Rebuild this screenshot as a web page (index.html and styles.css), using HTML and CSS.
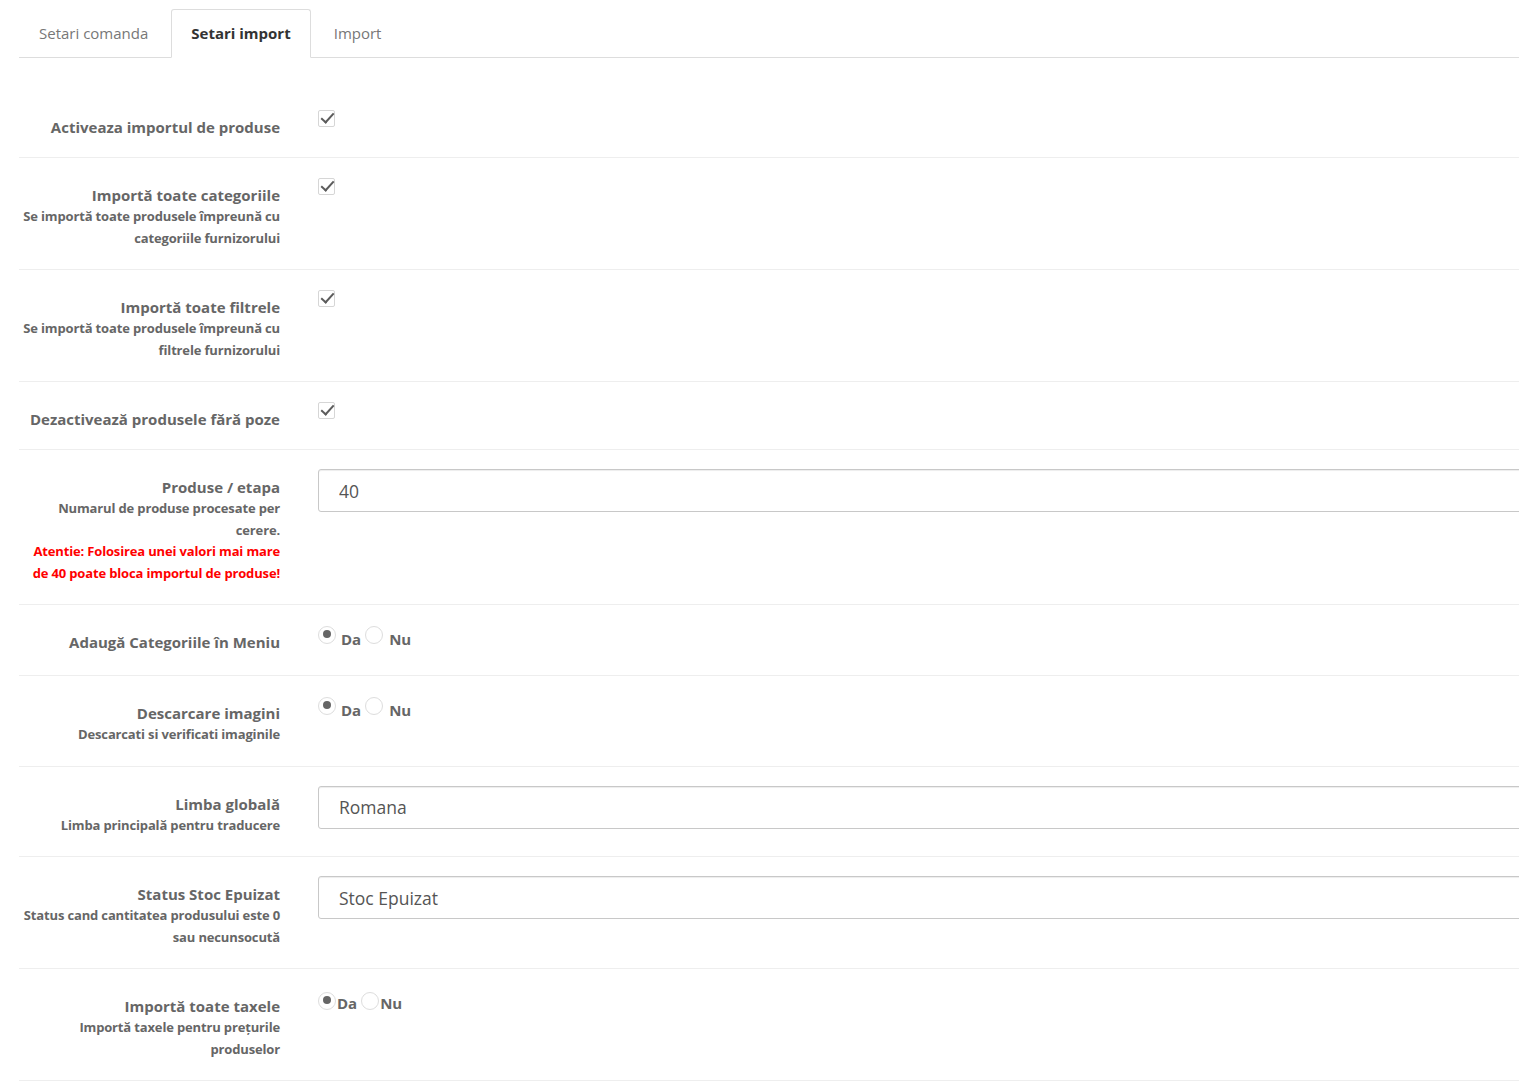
FILE: index.html
```html
<!DOCTYPE html>
<html lang="ro">
<head>
    <meta charset="UTF-8">
    <meta name="viewport" content="width=device-width, initial-scale=1.0">
    <title>Setari import</title>
    <link rel="stylesheet" href="styles.css">
</head>
<body>
    <div class="page">
        <ul class="tabs">
            <li class="tab">Setari comanda</li>
            <li class="tab active">Setari import</li>
            <li class="tab">Import</li>
        </ul>

        <form class="import-form">
            <div class="form-row">
                <div class="row-label">
                    <div class="label-title">Activeaza importul de produse</div>
                </div>
                <div class="row-control"><span class="checkbox"></span></div>
            </div>

            <div class="form-row">
                <div class="row-label">
                    <div class="label-title">Importă toate categoriile</div>
                    <div class="label-help">Se importă toate produsele împreună cu categoriile furnizorului</div>
                </div>
                <div class="row-control"><span class="checkbox"></span></div>
            </div>

            <div class="form-row">
                <div class="row-label">
                    <div class="label-title">Importă toate filtrele</div>
                    <div class="label-help">Se importă toate produsele împreună cu filtrele furnizorului</div>
                </div>
                <div class="row-control"><span class="checkbox"></span></div>
            </div>

            <div class="form-row">
                <div class="row-label">
                    <div class="label-title">Dezactivează produsele fără poze</div>
                </div>
                <div class="row-control"><span class="checkbox"></span></div>
            </div>

            <div class="form-row">
                <div class="row-label">
                    <div class="label-title">Produse / etapa</div>
                    <div class="label-help">Numarul de produse procesate per cerere.<br><span class="warning">Atentie: Folosirea unei valori mai mare de 40 poate bloca importul de produse!</span></div>
                </div>
                <div class="row-control"><input class="text-input" type="text" value="40"></div>
            </div>

            <div class="form-row">
                <div class="row-label">
                    <div class="label-title">Adaugă Categoriile în Meniu</div>
                </div>
                <div class="row-control">
                    <div class="radio-group">
                        <span class="radio checked"></span><span class="radio-text">Da</span>
                        <span class="radio"></span><span class="radio-text">Nu</span>
                    </div>
                </div>
            </div>

            <div class="form-row">
                <div class="row-label">
                    <div class="label-title">Descarcare imagini</div>
                    <div class="label-help">Descarcati si verificati imaginile</div>
                </div>
                <div class="row-control">
                    <div class="radio-group">
                        <span class="radio checked"></span><span class="radio-text">Da</span>
                        <span class="radio"></span><span class="radio-text">Nu</span>
                    </div>
                </div>
            </div>

            <div class="form-row">
                <div class="row-label">
                    <div class="label-title">Limba globală</div>
                    <div class="label-help">Limba principală pentru traducere</div>
                </div>
                <div class="row-control"><input class="text-input" type="text" value="Romana"></div>
            </div>

            <div class="form-row">
                <div class="row-label">
                    <div class="label-title">Status Stoc Epuizat</div>
                    <div class="label-help">Status cand cantitatea produsului este 0 sau necunsocută</div>
                </div>
                <div class="row-control"><input class="text-input" type="text" value="Stoc Epuizat"></div>
            </div>

            <div class="form-row">
                <div class="row-label">
                    <div class="label-title">Importă toate taxele</div>
                    <div class="label-help">Importă taxele pentru prețurile produselor</div>
                </div>
                <div class="row-control">
                    <div class="radio-group tight">
                        <span class="radio checked"></span><span class="radio-text">Da</span>
                        <span class="radio"></span><span class="radio-text">Nu</span>
                    </div>
                </div>
            </div>
        </form>
    </div>
</body>
</html>
```

FILE: styles.css
```css
* {
    margin: 0;
    padding: 0;
    box-sizing: border-box;
    font-family: 'Open Sans', 'Noto Sans', sans-serif;
}

body {
    background-color: #fff;
    color: #666;
    overflow: hidden;
}

.page {
    width: 1640px;
    padding-left: 19px;
}

/* Tabs */
.tabs {
    display: flex;
    list-style: none;
    padding-top: 9px;
    border-bottom: 1px solid #ddd;
}

.tab {
    padding: 0 19px;
    margin-right: 3px;
    line-height: 47px;
    font-size: 15px;
    color: #777;
    border: 1px solid transparent;
    border-radius: 3px 3px 0 0;
    margin-bottom: -1px;
}

.tab.active {
    color: #333;
    font-weight: 700;
    background: #fff;
    border-color: #ddd;
    border-bottom-color: #fff;
}

/* Form rows */
.import-form {
    margin-top: 32px;
}

.form-row {
    display: flex;
    align-items: flex-start;
    padding: 20px 0;
    border-bottom: 1px solid #eee;
}

.row-label {
    width: 261px;
    flex-shrink: 0;
    padding: 7px 0 0 2px;
    text-align: right;
}

.label-title {
    font-size: 15px;
    line-height: 20px;
    font-weight: 700;
    color: #666;
}

.label-help {
    margin-top: 1px;
    font-size: 13px;
    line-height: 21.5px;
    font-weight: 700;
    letter-spacing: -0.15px;
    color: #666;
}

.warning {
    color: #f00;
}

.row-control {
    flex: 1;
    margin-left: 38px;
}

.checkbox {
    display: block;
    width: 17px;
    height: 17px;
    border: 1px solid #d6d6d6;
    border-radius: 2px;
    background: #fff;
    position: relative;
}

.checkbox::after {
    content: "";
    position: absolute;
    left: 5px;
    top: -1px;
    width: 5px;
    height: 11px;
    border-right: 2.5px solid #5c5c5c;
    border-bottom: 2.5px solid #5c5c5c;
    transform: rotate(42deg);
}

.text-input {
    display: block;
    width: 100%;
    height: 43px;
    margin-top: -1px;
    padding: 0 20px;
    font-size: 17.5px;
    color: #555;
    border: 1px solid #c8c8c8;
    border-radius: 3px;
    box-shadow: inset 0 1px 1px rgba(0, 0, 0, 0.075);
    background: #fff;
}

.radio-group {
    display: flex;
    align-items: flex-start;
    height: 30px;
    padding-top: 1px;
}

.radio {
    width: 18px;
    height: 18px;
    border: 1px solid #ddd;
    border-radius: 50%;
    background: #fff;
    position: relative;
    flex-shrink: 0;
}

.radio.checked::after {
    content: "";
    position: absolute;
    left: 4px;
    top: 3px;
    width: 8px;
    height: 8px;
    border-radius: 50%;
    background: #666;
}

.radio-text {
    margin: 3px 4px 0 5px;
    font-size: 15px;
    line-height: 20px;
    font-weight: 700;
    color: #666;
}

.radio-group .radio-text:last-child {
    margin-left: 6px;
}

.radio-group.tight {
    padding-top: 3px;
}

.radio-group.tight .radio-text {
    margin: 1px 4px 0 1px;
}

.radio-group.tight .radio-text:last-child {
    margin-left: 1px;
}
```
